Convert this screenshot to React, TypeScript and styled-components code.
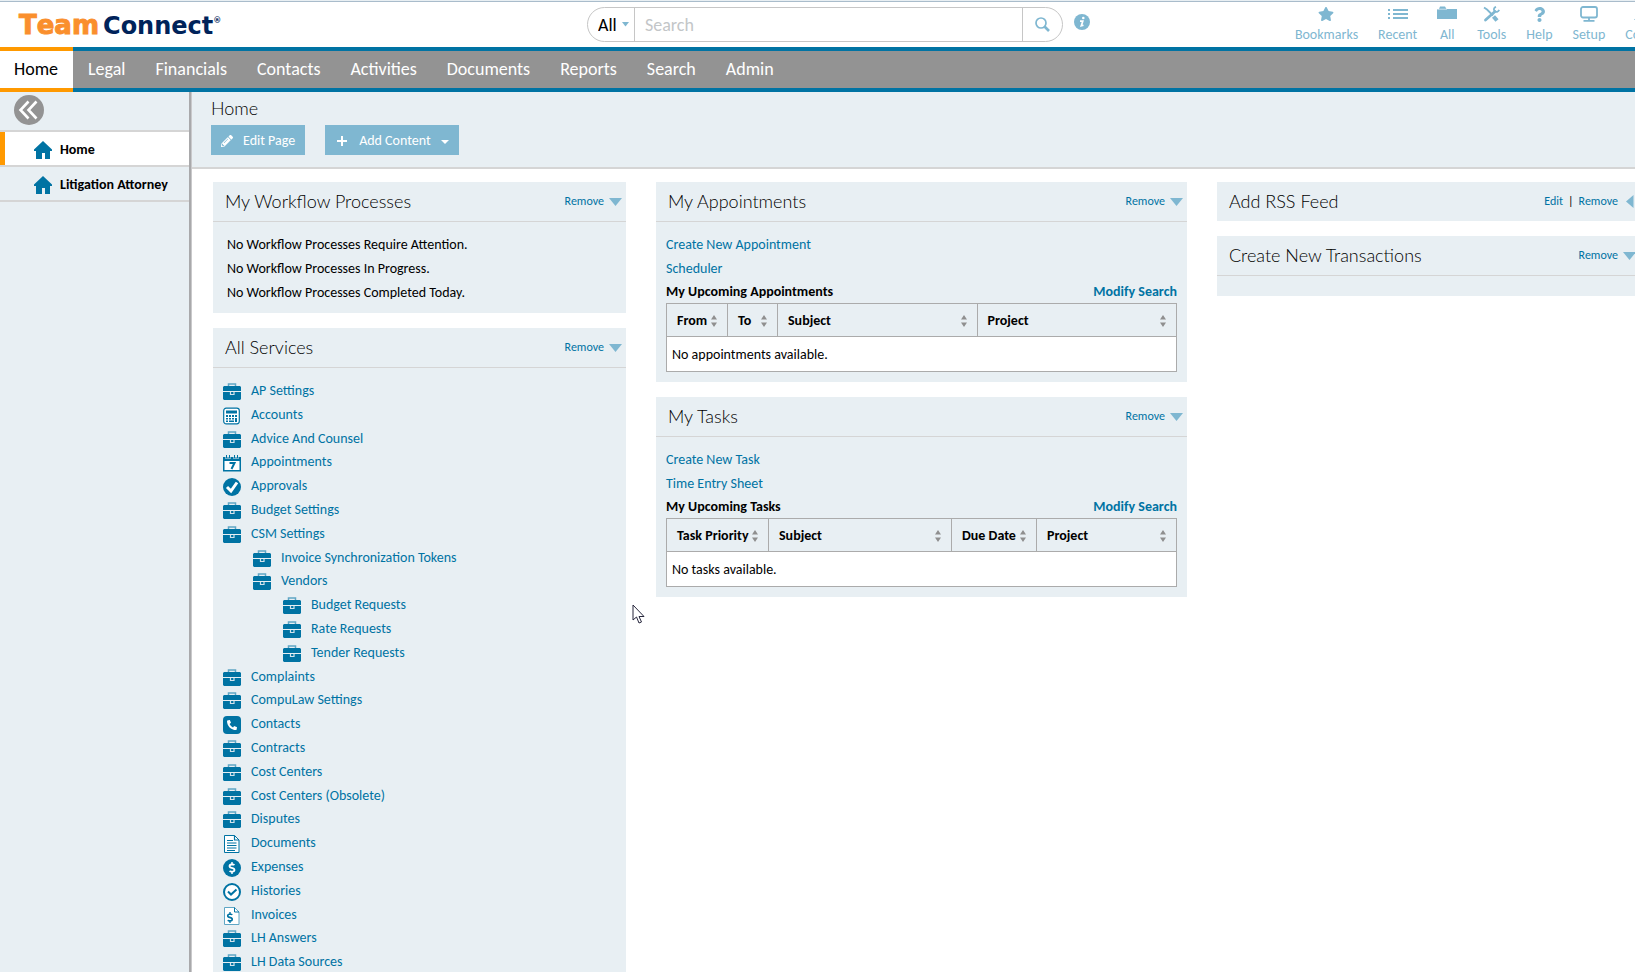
import React from 'react';
import styled, { createGlobalStyle } from 'styled-components';
import { FaQuestion, FaStar, FaPencilAlt, FaPhoneAlt, FaDollarSign } from 'react-icons/fa';

const c = {
  blue: '#0073a3',
  sky: '#7fb7d1',
  pale: '#e8eff3',
  grey: '#939393',
  orange: '#ff9900',
  line: '#d5d5d5',
  tableLine: '#ababab',
};
const sans = "Calibri, Carlito, Lato, sans-serif";
const light = "Lato, Carlito, sans-serif";

const GlobalStyle = createGlobalStyle`
  * { box-sizing: border-box; }
  body { margin: 0; background: #fff; color: #000; font: 14px/24px ${sans}; }
  ul { list-style: none; margin: 0; padding: 0; }
  a { color: ${c.blue}; text-decoration: none; }
  button, input, select { font-family: inherit; }
  button { cursor: pointer; border: 0; padding: 0; }
  svg { display: block; flex: none; }
`;

/* ---------- page shell ---------- */
const Page = styled.div`
  display: flex;
  flex-direction: column;
  height: 100vh;
  overflow: hidden;
`;
const TopBar = styled.header`
  flex: none;
  display: flex;
  height: 47px;
  border-top: 1px solid ${c.pale};
  box-shadow: inset 0 1px 0 #a9bccb;
`;
const Body = styled.div`
  flex: 1;
  min-height: 0;
  display: flex;
`;

/* ---------- logo ---------- */
const Logo = styled.a`
  flex: 1 1 587px;
  max-width: 587px;
  padding-left: 19px;
  display: flex;
  align-items: baseline;
  font: bold 24px/48px "DejaVu Sans", Verdana, sans-serif;
  color: #00235a;
`;
const LogoTeam = styled.span`
  color: #fa8f2d;
  font-size: 26px;
  font-kerning: none;
  margin-right: 4px;
  -webkit-text-stroke: 1px #fa8f2d;
`;
const LogoMark = styled.span`
  align-self: flex-start;
  padding-top: 14px;
  font-size: 8px;
  line-height: 12px;
`;

/* ---------- search ---------- */
const SearchForm = styled.form`
  flex: 0 1 476px;
  display: flex;
  height: 35px;
  margin-top: 6px;
  border: 1px solid #c6c6c6;
  border-radius: 18px;
  overflow: hidden;
`;
const ScopeBox = styled.div`
  position: relative;
  flex: none;
  width: 47px;
  border-right: 1px solid #c6c6c6;
`;
const Scope = styled.select`
  appearance: none;
  width: 100%;
  height: 100%;
  padding: 0 0 0 10px;
  border: 0;
  background: none;
  font-size: 18px;
`;
const ScopeArrow = styled.svg`
  position: absolute;
  right: 5px;
  top: 14px;
  pointer-events: none;
`;
const SearchInput = styled.input`
  flex: 1;
  min-width: 0;
  border: 0;
  padding: 0 10px;
  background: none;
  font-size: 18px;
  &::placeholder { color: #c3c6c8; }
`;
const SearchButton = styled.button`
  width: 40px;
  border-left: 1px solid #c6c6c6;
  background: none;
  display: grid;
  place-items: center;
`;
const InfoButton = styled.button`
  align-self: flex-start;
  margin: 13px 0 0 11px;
  background: none;
`;

/* ---------- quick links ---------- */
const QuickLinks = styled.nav`
  flex: none;
  margin: 0 -38px 0 auto;
  display: flex;
  gap: 20px;
`;
const QuickLink = styled.a`
  min-width: 20px;
  display: flex;
  flex-direction: column;
  align-items: center;
  color: ${c.sky};
`;
const QuickIcon = styled.span`
  height: 23px;
  padding-top: 4px;
  display: grid;
  place-items: center;
`;

/* ---------- main tabs ---------- */
const Tabs = styled.nav`
  flex: none;
  display: flex;
  height: 45px;
  background: ${c.grey};
  border: solid ${c.blue};
  border-width: 4px 0;
`;
const Tab = styled.a<{ $active?: boolean }>`
  height: 45px;
  margin-top: -4px;
  padding: 0 15px;
  border: solid ${p => (p.$active ? c.orange : c.blue)};
  border-width: 4px 0;
  background: ${p => (p.$active ? '#fff' : c.grey)};
  color: ${p => (p.$active ? '#000' : '#fff')};
  font-size: 18px;
  line-height: 37px;
  &:first-child { padding-left: 14px; }
`;

/* ---------- side bar ---------- */
const Side = styled.aside`
  flex: none;
  width: 192px;
  background: ${c.pale};
  border-right: 1px solid #c9c9cb;
  box-shadow: inset -2px 0 0 #a9a9ab;
`;
const SideTop = styled.div`
  height: 40px;
  margin-right: 2px;
  padding: 3px 14px;
  border-bottom: 2px solid ${c.line};
`;
const CollapseButton = styled.button`
  width: 30px;
  height: 30px;
  border-radius: 50%;
  background: ${c.grey};
`;
const SideLink = styled.a<{ $active?: boolean }>`
  display: flex;
  align-items: center;
  gap: 8px;
  height: 35px;
  margin-right: 2px;
  padding: 2px 0 0 34px;
  box-shadow: ${p => (p.$active ? `inset 5px 0 0 ${c.orange}` : 'none')};
  border-bottom: 2px solid ${c.line};
  background: ${p => (p.$active ? '#fff' : c.pale)};
  color: #000;
  font-weight: bold;
`;

/* ---------- main area ---------- */
const Main = styled.main`
  flex: 1;
  min-width: 0;
`;
const PageHead = styled.div`
  padding: 0 19px 12px;
  background: ${c.pale};
  border-bottom: 2px solid ${c.line};
`;
const PageTitle = styled.h1`
  margin: 0;
  font: 300 18px/33px ${light};
`;
const Actions = styled.div`
  display: flex;
  gap: 20px;
`;
const Action = styled.button`
  display: flex;
  align-items: center;
  gap: 10px;
  height: 30px;
  padding: 0 10px;
  background: ${c.sky};
  color: #fff;
  font-size: 14px;
  svg { margin-top: 2px; }
`;
const Columns = styled.div`
  display: grid;
  grid-template-columns: 413fr 531fr 423fr;
  align-items: start;
  gap: 30px;
  padding: 13px 0 0 21px;
  margin-right: -5px;
`;
const Column = styled.div`
  display: grid;
  gap: 15px;
  min-width: 0;
`;

/* ---------- panels ---------- */
const PanelBox = styled.section`
  background: ${c.pale};
`;
const PanelHead = styled.div`
  display: flex;
  align-items: center;
  height: 39px;
  padding: 0 4px 0 12px;
`;
const PanelTitle = styled.h2`
  flex: 1;
  margin: 0;
  font: 300 18px/39px ${light};
`;
const PanelLinks = styled.div`
  display: flex;
  align-items: center;
  gap: 5px;
  padding-bottom: 2px;
  font-size: 12px;
`;
const Fold = styled.button`
  width: 13px;
  padding-top: 1px;
  background: none;
  display: grid;
  place-items: center;
`;
const PanelBody = styled.div`
  min-height: 21px;
  border-top: 1px solid ${c.line};
`;
const Notices = styled.ul`
  padding: 11px 14px 8px;
`;
const Services = styled.ul`
  padding: 11px 10px 16px;
`;
const Service = styled.li<{ $level: number }>`
  padding-left: ${p => p.$level * 30}px;
  line-height: 1.7;
`;
const ServiceLink = styled.a`
  display: flex;
  gap: 10px;
`;
const ServiceIcon = styled.svg`
  margin-top: 4px;
`;
const Search = styled.div`
  padding: 11px 10px 10px;
`;
const SearchLink = styled.a`
  display: block;
`;
const TableHead = styled.div`
  display: flex;
  justify-content: space-between;
  padding-bottom: 1px;
  font-weight: bold;
  line-height: 21px;
`;
const Table = styled.table`
  width: 100%;
  table-layout: fixed;
  border-collapse: collapse;
  border: 1px solid ${c.tableLine};
`;
const Th = styled.th<{ $width?: string }>`
  width: ${p => p.$width ?? 'auto'};
  height: 33px;
  padding: 2px 10px 0 10px;
  border: 1px solid ${c.tableLine};
  text-align: left;
  white-space: nowrap;
`;
const Sort = styled.span`
  display: flex;
  align-items: center;
  justify-content: space-between;
`;
const Td = styled.td`
  height: 35px;
  padding: 2px 5px 0;
  background: #fff;
`;
const Pointer = styled.svg`
  position: fixed;
  left: 632px;
  top: 604px;
  pointer-events: none;
`;

/* ---------- drawings ---------- */
type Kind = 'case' | 'calc' | 'cal' | 'check' | 'phone' | 'doc' | 'dollar' | 'history' | 'invoice';
const drawings: Record<Kind, React.ReactNode> = {
  case: (
    <>
      <path d="M5.500 3.500V1h7v2.500" fill="none" stroke="#5fa6c5" strokeWidth="1.500" />
      <path d="M1 3h16l1 1v4H0V4z M0 9h18v7l-1 1H1l-1-1z" fill={c.blue} />
      <path d="M7.500 9v2.500h3.500V9" fill="none" stroke="#cfe2ec" strokeWidth="1.200" />
    </>
  ),
  calc: (
    <>
      <rect x=".7" y="1.200" width="15.600" height="15.600" rx="2.500" fill="#fff" stroke={c.blue} strokeWidth="1.200" />
      <path d="M3 3.500h11v3H3zM3 8h2v2H3zM6 8h2v2H6zM9 8h2v2H9zM12 8h2v2h-2zM3 11h2v1.500H3zM6 11h2v1.500H6zM9 11h2v1.500H9zM12 11h2v4h-2zM3 13.500h2V15H3zM6 13.500h5V15H6z" fill={c.blue} />
    </>
  ),
  cal: (
    <>
      <path d="M0 3h18v14.500H0z" fill={c.blue} />
      <path d="M1.500 7h15v9h-15z" fill="#fff" />
      <path d="M3.500 1v4M6.500 1v4M11.500 1v4M14.500 1v4" stroke={c.pale} strokeWidth="2" />
      <path d="M3.500 1v3.500M6.500 1v3.500M11.500 1v3.500M14.500 1v3.500" stroke={c.blue} />
      <path d="M6.500 9h5l-3 6" fill="none" stroke={c.blue} strokeWidth="2" />
    </>
  ),
  check: (
    <>
      <circle cx="9" cy="9" r="9" fill={c.blue} />
      <path d="M4 9 8 13l6-8.500" fill="none" stroke="#fff" strokeWidth="3" />
    </>
  ),
  phone: (
    <>
      <rect width="18" height="18" rx="4" fill={c.blue} />
      <FaPhoneAlt x="4" y="4" size={10} color="#fff" />
    </>
  ),
  doc: (
    <>
      <path d="M1.500.5h10l4.500 4.500v12.500H1.500z" fill="#fff" stroke={c.blue} />
      <path d="M11.500.5V5H16M4 5.500h6M4 8h9.500M4 10.500h9.500M4 13h9.500M4 15.500h8" fill="none" stroke={c.blue} strokeWidth="1.200" />
    </>
  ),
  dollar: (
    <>
      <circle cx="9" cy="9" r="9" fill={c.blue} />
      <FaDollarSign x="3" y="3" size={12} color="#fff" />
    </>
  ),
  history: (
    <>
      <circle cx="9" cy="9" r="8" fill="#fff" stroke={c.blue} strokeWidth="2" />
      <path d="M5 8.500 8 11.500l5.500-5" fill="none" stroke={c.blue} strokeWidth="2" />
    </>
  ),
  invoice: (
    <>
      <path d="M1.500.5h10l4.500 4.500v12.500H1.500z" fill="#fff" stroke="#5fa6c5" />
      <path d="M11.500.5V5H16" fill="none" stroke={c.blue} />
      <FaDollarSign x="1.500" y="5" size={11} color={c.blue} />
    </>
  ),
};

const Triangle = ({ left = false }: { left?: boolean }) => (
  <svg width="13" height="13" viewBox="0 0 13 13" fill={c.sky}>
    <path d={left ? 'M10.500 0v13L3 6.500z' : 'M0 3h13L6.500 11z'} />
  </svg>
);
const Caret = ({ color }: { color: string }) => (
  <svg width="8" height="8" viewBox="0 0 8 8"><path d="M0 3h8L4 7z" fill={color} /></svg>
);
const HomeIcon = () => (
  <svg width="18" height="18" viewBox="0 0 18 18" fill={c.blue}>
    <path d="M9 0 18 8.500V10h-2v8h-5v-6H8v6H2v-8H0V8.500z" />
  </svg>
);
const SortIcon = () => (
  <svg width="6" height="12" viewBox="0 0 6 12" fill="#8f8f8f"><path d="M3 0l3 4.500H0zM3 12l3-4.500H0z" /></svg>
);
const ListIcon = () => (
  <svg width="20" height="12" viewBox="0 0 20 12" fill={c.sky}>
    <path d="M0 1h2v2H0zM5 1h15v2H5zM0 5h2v2H0zM5 5h15v2H5zM0 9h2v2H0zM5 9h15v2H5z" />
  </svg>
);
const FolderIcon = () => (
  <svg width="20" height="16" viewBox="0 0 20 16" fill={c.sky}>
    <path d="M2 3l1-2.500h5L9.500 3H20v10H0V3.500z" />
    <path d="M1 3.200h9" stroke="#fff" strokeWidth=".6" />
  </svg>
);
const ToolsIcon = () => (
  <svg width="17" height="16" viewBox="0 0 17 16" fill="none" stroke={c.sky}>
    <path d="M2.500 14 12 5.500" strokeWidth="2.800" strokeLinecap="round" />
    <path d="M13 .8c-2.500 1-2.500 3-1.300 4.500 1.500 1 3.500.8 4.500-1.500" strokeWidth="1.800" />
    <path d="M1 1.500l3 2 6 6" strokeWidth="1.800" />
    <path d="M10.500 10.500l3.500 4" strokeWidth="4" />
  </svg>
);
const SetupIcon = () => (
  <svg width="18" height="16" viewBox="0 0 18 16" fill="none" stroke={c.sky} strokeWidth="1.800">
    <rect x="1" y="1" width="16" height="10.500" rx="2" />
    <path d="M9 12v2M3.500 14.800h11" />
  </svg>
);
const CutIcon = () => (
  <svg width="30" height="16" viewBox="0 0 30 16" fill={c.sky}><path d="M0 14 6 6l9-4 9 4 6 8z" /></svg>
);

/* ---------- content ---------- */
const tabs = ['Home', 'Legal', 'Financials', 'Contacts', 'Activities', 'Documents', 'Reports', 'Search', 'Admin'];
const quick: [string, React.ReactNode][] = [
  ['Bookmarks', <FaStar size={16} />],
  ['Recent', <ListIcon />],
  ['All', <FolderIcon />],
  ['Tools', <ToolsIcon />],
  ['Help', <FaQuestion size={15} />],
  ['Setup', <SetupIcon />],
  ['Collapse', <CutIcon />],
];
const services: [string, Kind?, number?][] = [
  ['AP Settings'], ['Accounts', 'calc'], ['Advice And Counsel'], ['Appointments', 'cal'], ['Approvals', 'check'],
  ['Budget Settings'], ['CSM Settings'], ['Invoice Synchronization Tokens', 'case', 1], ['Vendors', 'case', 1],
  ['Budget Requests', 'case', 2], ['Rate Requests', 'case', 2], ['Tender Requests', 'case', 2], ['Complaints'],
  ['CompuLaw Settings'], ['Contacts', 'phone'], ['Contracts'], ['Cost Centers'], ['Cost Centers (Obsolete)'],
  ['Disputes'], ['Documents', 'doc'], ['Expenses', 'dollar'], ['Histories', 'history'], ['Invoices', 'invoice'],
  ['LH Answers'], ['LH Data Sources'],
];

interface PanelProps { title: string; edit?: boolean; folded?: boolean; children?: React.ReactNode }
const Panel = ({ title, edit, folded, children }: PanelProps) => (
  <PanelBox>
    <PanelHead>
      <PanelTitle>{title}</PanelTitle>
      <PanelLinks>
        {edit && <><a href="#edit">Edit</a><span>|</span></>}
        <a href="#remove">Remove</a>
        <Fold type="button" aria-label={`Fold ${title}`}><Triangle left={folded} /></Fold>
      </PanelLinks>
    </PanelHead>
    {!folded && <PanelBody>{children}</PanelBody>}
  </PanelBox>
);

interface ResultsProps { links: string[]; heading: string; columns: [string, string?][]; empty: string }
const Results = ({ links, heading, columns, empty }: ResultsProps) => (
  <Search>
    {links.map(l => <SearchLink key={l} href="#open">{l}</SearchLink>)}
    <TableHead><span>{heading}</span><a href="#modify">Modify Search</a></TableHead>
    <Table aria-label={heading}>
      <thead>
        <tr>
          {columns.map(([name, width]) => (
            <Th key={name} $width={width} scope="col"><Sort>{name}<SortIcon /></Sort></Th>
          ))}
        </tr>
      </thead>
      <tbody><tr><Td colSpan={columns.length}>{empty}</Td></tr></tbody>
    </Table>
  </Search>
);

export default function App() {
  return (
    <Page>
      <GlobalStyle />
      <TopBar>
        <Logo href="#home"><LogoTeam>Team</LogoTeam>Connect<LogoMark>®</LogoMark></Logo>
        <SearchForm role="search" onSubmit={e => e.preventDefault()}>
          <ScopeBox>
            <Scope aria-label="Search scope"><option>All</option></Scope>
            <ScopeArrow width="7" height="5" viewBox="0 0 7 5"><path d="M0 0h7L3.500 4.500z" fill={c.sky} /></ScopeArrow>
          </ScopeBox>
          <SearchInput aria-label="Search" placeholder="Search" />
          <SearchButton type="submit" aria-label="Run search">
            <svg width="15" height="15" viewBox="0 0 15 15" fill="none" stroke={c.sky}>
              <circle cx="6" cy="6" r="5" strokeWidth="1.700" />
              <path d="M9.500 9.500 14 14" strokeWidth="2.600" />
            </svg>
          </SearchButton>
        </SearchForm>
        <InfoButton type="button" aria-label="Search help">
          <svg width="16" height="16" viewBox="0 0 16 16">
            <circle cx="8" cy="8" r="8" fill={c.sky} />
            <circle cx="9.300" cy="4" r="1.300" fill="#fff" />
            <path d="M6 7.200h2.800L7.300 11.800l2.200-.6" fill="none" stroke="#fff" strokeWidth="1.700" />
          </svg>
        </InfoButton>
        <QuickLinks aria-label="Quick links">
          {quick.map(([name, icon]) => (
            <QuickLink key={name} href="#quick"><QuickIcon>{icon}</QuickIcon>{name}</QuickLink>
          ))}
        </QuickLinks>
      </TopBar>
      <Tabs aria-label="Main">
        {tabs.map(t => <Tab key={t} href="#tab" $active={t === 'Home'}>{t}</Tab>)}
      </Tabs>
      <Body>
        <Side>
          <SideTop>
            <CollapseButton type="button" aria-label="Collapse side bar">
              <svg width="30" height="30" viewBox="0 0 30 30" fill="none" stroke="#fff" strokeWidth="2.600">
                <path d="M14.500 6.500 6.500 15l8 8.500M22.500 6.500l-8 8.500 8 8.500" />
              </svg>
            </CollapseButton>
          </SideTop>
          <SideLink href="#home" $active><HomeIcon />Home</SideLink>
          <SideLink href="#attorney"><HomeIcon />Litigation Attorney</SideLink>
        </Side>
        <Main>
          <PageHead>
            <PageTitle>Home</PageTitle>
            <Actions>
              <Action type="button"><FaPencilAlt size={12} />Edit Page</Action>
              <Action type="button">
                <svg width="14" height="14" viewBox="0 0 14 14"><path d="M7 2v10M2 7h10" stroke="#fff" strokeWidth="2" /></svg>
                Add Content<Caret color="#fff" />
              </Action>
            </Actions>
          </PageHead>
          <Columns>
            <Column>
              <Panel title="My Workflow Processes">
                <Notices>
                  <li>No Workflow Processes Require Attention.</li>
                  <li>No Workflow Processes In Progress.</li>
                  <li>No Workflow Processes Completed Today.</li>
                </Notices>
              </Panel>
              <Panel title="All Services">
                <Services>
                  {services.map(([name, kind = 'case', level = 0]) => (
                    <Service key={name} $level={level}>
                      <ServiceLink href="#service">
                        <ServiceIcon width="18" height="18" viewBox="0 0 18 18">{drawings[kind]}</ServiceIcon>
                        {name}
                      </ServiceLink>
                    </Service>
                  ))}
                </Services>
              </Panel>
            </Column>
            <Column>
              <Panel title="My Appointments">
                <Results
                  links={['Create New Appointment', 'Scheduler']}
                  heading="My Upcoming Appointments"
                  columns={[['From', '61px'], ['To', '50px'], ['Subject'], ['Project']]}
                  empty="No appointments available."
                />
              </Panel>
              <Panel title="My Tasks">
                <Results
                  links={['Create New Task', 'Time Entry Sheet']}
                  heading="My Upcoming Tasks"
                  columns={[['Task Priority', '102px'], ['Subject'], ['Due Date', '85px'], ['Project', '140px']]}
                  empty="No tasks available."
                />
              </Panel>
            </Column>
            <Column>
              <Panel title="Add RSS Feed" edit folded />
              <Panel title="Create New Transactions" />
            </Column>
          </Columns>
        </Main>
      </Body>
      <Pointer width="13" height="20" viewBox="0 0 13 20">
        <path d="M1 1v15l3.500-3 2.500 6 2.500-1-2.500-5.500H12z" fill="#fff" stroke="#26263c" />
      </Pointer>
    </Page>
  );
}
